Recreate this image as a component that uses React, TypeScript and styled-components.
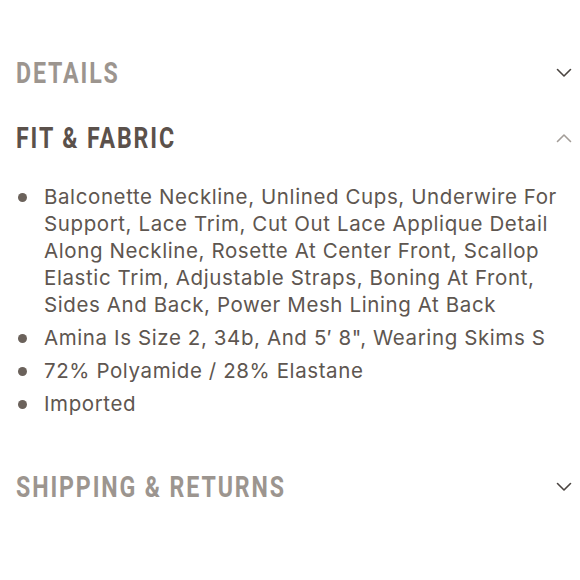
import React from 'react';
import styled, { createGlobalStyle } from 'styled-components';

const GlobalStyle = createGlobalStyle`
  html, body {
    margin: 0;
    padding: 0;
    background: #ffffff;
  }
`;

type Section = {
  title: string;
  open: boolean;
  items?: string[];
};

const sections: Section[] = [
  { title: 'DETAILS', open: false },
  {
    title: 'FIT & FABRIC',
    open: true,
    items: [
      'Balconette Neckline, Unlined Cups, Underwire For Support, Lace Trim, Cut Out Lace Applique Detail Along Neckline, Rosette At Center Front, Scallop Elastic Trim, Adjustable Straps, Boning At Front, Sides And Back, Power Mesh Lining At Back',
      'Amina Is Size 2, 34b, And 5\u2032 8", Wearing Skims S',
      '72% Polyamide / 28% Elastane',
      'Imported',
    ],
  },
  { title: 'SHIPPING & RETURNS', open: false },
];

const Chevron: React.FC<{ up: boolean }> = ({ up }) => (
  <ChevronSvg width="16" height="10" viewBox="0 0 16 10" $up={up}>
    <path
      d={up ? 'M1.5 8.5 L8 2 L14.5 8.5' : 'M1.5 1.5 L8 8 L14.5 1.5'}
      fill="none"
      stroke="currentColor"
      strokeWidth="1.6"
      strokeLinecap="round"
      strokeLinejoin="round"
    />
  </ChevronSvg>
);

const App: React.FC = () => {
  return (
    <Page>
      <GlobalStyle />
      {sections.map((s) => (
        <Block key={s.title}>
          <Header>
            <Title $open={s.open}>{s.title}</Title>
            <Chevron up={s.open} />
          </Header>
          {s.items && (
            <List>
              {s.items.map((item) => (
                <Item key={item}>
                  <Dot />
                  <ItemText>{item}</ItemText>
                </Item>
              ))}
            </List>
          )}
        </Block>
      ))}
    </Page>
  );
};

const Page = styled.div`
  width: 580px;
  height: 580px;
  box-sizing: border-box;
  padding: 40px 6px 0 16px;
  display: flex;
  flex-direction: column;
  overflow: hidden;
`;

const Block = styled.div`
  display: flex;
  flex-direction: column;
`;

const Header = styled.div`
  height: 65px;
  display: flex;
  align-items: center;
  justify-content: space-between;
`;

const Title = styled.div<{ $open: boolean }>`
  font-family: Roboto, 'Liberation Sans', sans-serif;
  font-weight: 700;
  font-size: 29.5px;
  letter-spacing: 2.4px;
  white-space: nowrap;
  transform: scaleX(0.785);
  transform-origin: left center;
  color: ${(p) => (p.$open ? '#5b514b' : '#9c958f')};
`;

const ChevronSvg = styled.svg<{ $up: boolean }>`
  color: ${(p) => (p.$up ? '#a39d98' : '#4a4440')};
  margin-right: 2px;
`;

const List = styled.ul`
  list-style: none;
  margin: 13px 0 37px 0;
  padding: 0;
  display: flex;
  flex-direction: column;
  gap: 6px;
`;

const Item = styled.li`
  display: flex;
  align-items: flex-start;
`;

const Dot = styled.span`
  flex: none;
  width: 9px;
  height: 9px;
  border-radius: 50%;
  background: #6b625b;
  margin: 10px 17px 0 2px;
`;

const ItemText = styled.span`
  font-family: Inter, 'Liberation Sans', sans-serif;
  font-size: 20.5px;
  letter-spacing: 0.6px;
  line-height: 27px;
  color: #5e5650;
`;

export default App;
